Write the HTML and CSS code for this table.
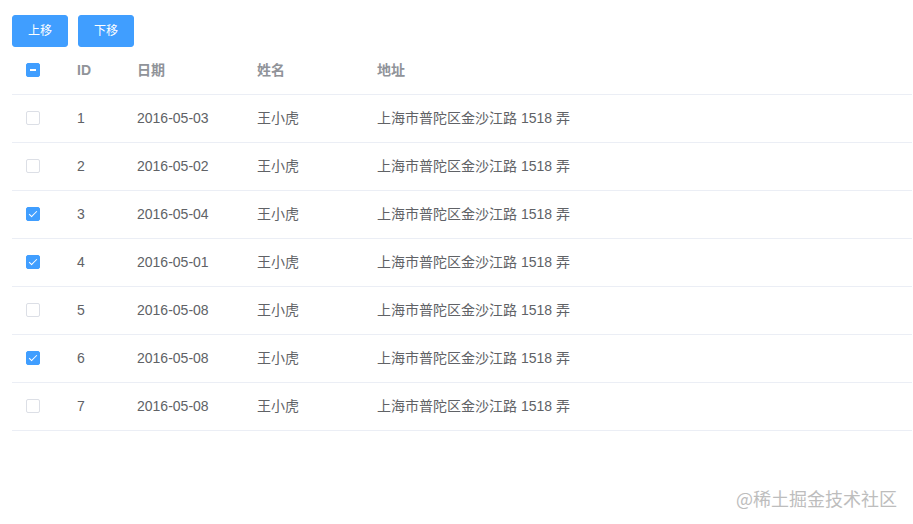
FILE: index.html
```html
<!DOCTYPE html>
<html lang="zh">
<head>
<meta charset="utf-8">
<link rel="stylesheet" href="styles.css">
</head>
<body>
<div class="page">
  <div class="toolbar">
    <button class="btn">上移</button>
    <button class="btn">下移</button>
  </div>
  <table class="table">
    <colgroup>
      <col class="c-sel"><col class="c-id"><col class="c-date"><col class="c-name"><col>
    </colgroup>
    <thead>
      <tr>
        <th class="sel"><span class="cb indeterminate"></span></th>
        <th>ID</th><th>日期</th><th>姓名</th><th>地址</th>
      </tr>
    </thead>
    <tbody>
      <tr><td class="sel"><span class="cb"></span></td><td>1</td><td>2016-05-03</td><td>王小虎</td><td>上海市普陀区金沙江路 1518 弄</td></tr>
      <tr><td class="sel"><span class="cb"></span></td><td>2</td><td>2016-05-02</td><td>王小虎</td><td>上海市普陀区金沙江路 1518 弄</td></tr>
      <tr><td class="sel"><span class="cb checked"></span></td><td>3</td><td>2016-05-04</td><td>王小虎</td><td>上海市普陀区金沙江路 1518 弄</td></tr>
      <tr><td class="sel"><span class="cb checked"></span></td><td>4</td><td>2016-05-01</td><td>王小虎</td><td>上海市普陀区金沙江路 1518 弄</td></tr>
      <tr><td class="sel"><span class="cb"></span></td><td>5</td><td>2016-05-08</td><td>王小虎</td><td>上海市普陀区金沙江路 1518 弄</td></tr>
      <tr><td class="sel"><span class="cb checked"></span></td><td>6</td><td>2016-05-08</td><td>王小虎</td><td>上海市普陀区金沙江路 1518 弄</td></tr>
      <tr><td class="sel"><span class="cb"></span></td><td>7</td><td>2016-05-08</td><td>王小虎</td><td>上海市普陀区金沙江路 1518 弄</td></tr>
    </tbody>
  </table>
</div>
<div class="watermark">@稀土掘金技术社区</div>
</body>
</html>
```
FILE: styles.css
```css
html, body {
  margin: 0;
  padding: 0;
  background: #fff;
  font-family: "Liberation Sans", "Noto Sans CJK SC", sans-serif;
}
.page {
  padding: 15px 12px 0 12px;
}
.toolbar {
  display: flex;
  gap: 10px;
}
.btn {
  background: #409eff;
  border: 1px solid #409eff;
  color: #fff;
  font-family: inherit;
  font-size: 12px;
  line-height: 12px;
  padding: 9px 15px;
  border-radius: 3px;
  width: 56px;
  height: 32px;
  box-sizing: border-box;
}
.table {
  width: 900px;
  border-collapse: collapse;
  table-layout: fixed;
  font-size: 14px;
  color: #606266;
}
.c-sel { width: 55px; }
.c-id { width: 60px; }
.c-date { width: 120px; }
.c-name { width: 120px; }
.table th, .table td {
  text-align: left;
  padding: 12px 10px;
  line-height: 23px;
  height: 23px;
  border-bottom: 1px solid #ebeef5;
  white-space: nowrap;
}
.table th {
  color: #909399;
  font-weight: bold;
}
.table .sel {
  padding-left: 14px;
  padding-right: 14px;
}
.cb {
  display: inline-block;
  position: relative;
  width: 14px;
  height: 14px;
  box-sizing: border-box;
  border: 1px solid #dcdfe6;
  border-radius: 2px;
  background: #fff;
  vertical-align: middle;
  margin-top: -3px;
}
.cb.checked, .cb.indeterminate {
  background: #409eff;
  border-color: #409eff;
}
.cb.checked::after {
  content: "";
  position: absolute;
  left: 4px;
  top: 1px;
  width: 3px;
  height: 7px;
  border: 1px solid #fff;
  border-left: 0;
  border-top: 0;
  transform: rotate(45deg);
}
.cb.indeterminate::before {
  content: "";
  position: absolute;
  left: 3px;
  right: 3px;
  top: 5px;
  height: 2px;
  background: #fff;
}
.watermark {
  position: absolute;
  left: 736px;
  top: 485px;
  font-size: 18px;
  color: #bdbdbd;
  font-family: "Noto Sans CJK SC", sans-serif;
}
```
